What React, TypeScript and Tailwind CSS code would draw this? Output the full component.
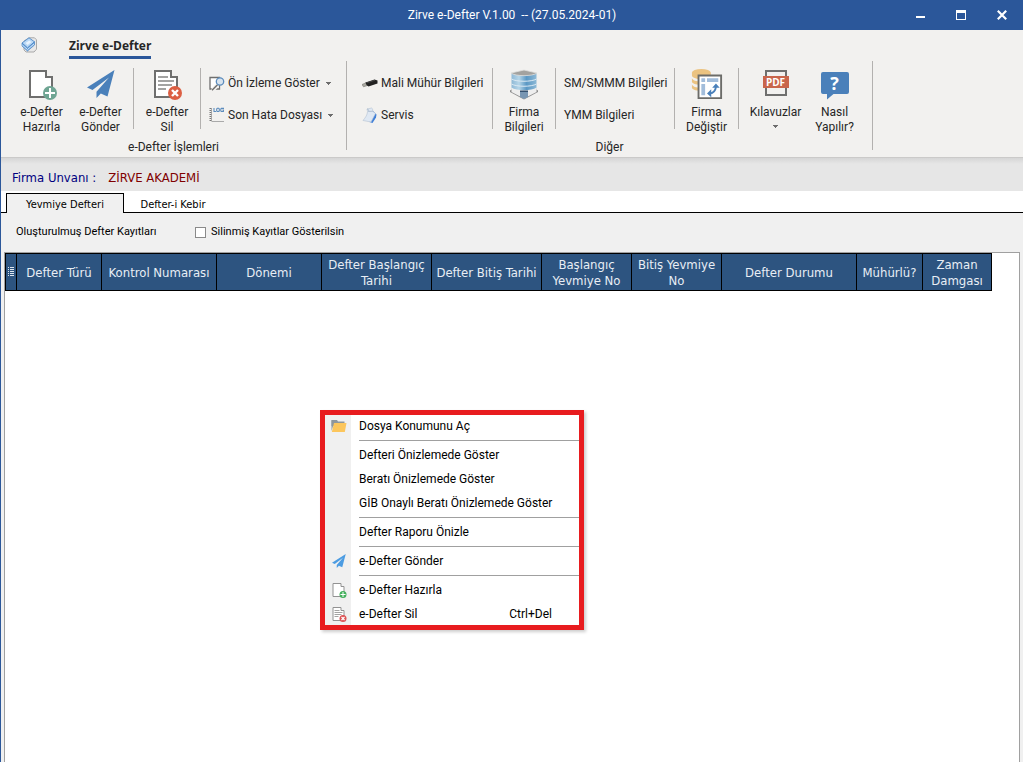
import type { ReactNode } from "react";

type IconProps = { className?: string };

function PageAddIcon({ className, page = "#6f6f6e", badge = "#6fa593" }: IconProps & { page?: string; badge?: string }) {
  return (
    <svg viewBox="0 0 32 32" className={className} aria-hidden="true">
      <path d="M4 3h16v6h6v20H4z" fill="#fff" stroke={page} strokeWidth="2" />
      <circle cx="24" cy="25" r="7" fill={badge} />
      <path d="M24 20v10M19 25h10" stroke="#fff" strokeWidth="2" />
    </svg>
  );
}

function PageDeleteIcon({ className, page = "#6f6f6e", badge = "#dc5f43" }: IconProps & { page?: string; badge?: string }) {
  return (
    <svg viewBox="0 0 32 32" className={className} aria-hidden="true">
      <path d="M4 3h16v6h6v20H4z" fill="#fff" stroke={page} strokeWidth="2" />
      <path d="M7 9h10M7 13h16M7 17h14M7 21h8" stroke="#a3a3a2" strokeWidth="2" />
      <circle cx="24" cy="25" r="7" fill={badge} />
      <path d="M21 22l6 6M27 22l-6 6" stroke="#fff" strokeWidth="2.400" />
    </svg>
  );
}

function PlaneIcon({ className, color = "#4a80ba" }: IconProps & { color?: string }) {
  return (
    <svg viewBox="0 0 32 32" className={className} aria-hidden="true">
      <path d="M29.500 2L2 19.500l5.500 2.500L24 9.500 11.500 23.800V30l4.300-4.400 6.700 2.900z" fill={color} />
    </svg>
  );
}

function AppLogo({ className }: IconProps) {
  return (
    <svg viewBox="0 0 16 16" className={className} aria-hidden="true">
      <path d="M8 .800h5.500l2 2v9.400l-2.500 2.800H5l-2-2V4z" fill="#e8e8e8" stroke="#a9a9a9" />
      <path d="M1 6L8 .800l5.500 4L6.500 11z" fill="#b9d8f5" stroke="#5b91cb" />
      <path d="M1 6v3l5.500 5 7-6V4.800L6.500 11z" fill="#6ba3dd" stroke="#4c86c4" strokeWidth=".7" />
      <path d="M1.300 8L6.500 12.500l6.500-5.500" fill="none" stroke="#d3e6f8" />
      <path d="M4.500 6l3.700-2.600 2.300 1.600-3.800 3z" fill="#e8f3fd" />
    </svg>
  );
}

function PreviewIcon({ className }: IconProps) {
  return (
    <svg viewBox="0 0 16 16" className={className} aria-hidden="true">
      <path d="M1 2.500h9.500V14H1z" fill="#fff" stroke="#6f6f6e" strokeWidth="1.300" />
      <path d="M3.500 15.500l4.500-5" stroke="#f2f1ef" strokeWidth="4" />
      <path d="M3 15.300l5.500-5.500" stroke="#6f6f6e" strokeWidth="1.500" />
      <circle cx="11" cy="6.500" r="3.700" fill="#d7e3ee" stroke="#5c8cbd" strokeWidth="1.300" />
    </svg>
  );
}

function LogIcon({ className }: IconProps) {
  return (
    <svg viewBox="0 0 16 16" className={className} aria-hidden="true">
      <path d="M1.500 1v13.500" stroke="#777" strokeWidth="2" strokeDasharray="1 1" />
      <path d="M2.500 14.500H15" stroke="#aaa" />
      <path d="M2.500 1v13" stroke="#999" strokeWidth=".8" />
      <path
        d="M5 1v3.500h2M8.300 1.300h1.400l.6.600v2l-.6.600H8.300l-.6-.6v-2zM15 1.400h-2.600l-.6.600v1.900l.6.600h2V3h-1"
        fill="none"
        stroke="#5c8cbd"
        strokeWidth="1.100"
      />
    </svg>
  );
}

function UsbIcon({ className }: IconProps) {
  return (
    <svg viewBox="0 0 16 16" className={className} aria-hidden="true">
      <path d="M0 9.500l4-1.700 2 2.500-4.500 1.500z" fill="#aaa9a2" stroke="#77766f" strokeWidth=".6" />
      <path d="M3.500 7.500L12.500 4.500l3 1v3L6.500 11.500l-2-1.500z" fill="#222" />
      <path d="M5 7.800l8-2.600" stroke="#555" strokeWidth=".7" />
    </svg>
  );
}

function ServiceIcon({ className }: IconProps) {
  return (
    <svg viewBox="0 0 16 16" className={className} aria-hidden="true">
      <path d="M11 4l3.500 3.500-.5 3L10.500 16l-3-1z" fill="#3f7fd8" />
      <path d="M5 2l4.500-1c1.500.500 1 2.500 1.500 3.500l2.500 2L9 15l-8-1.500C3 11 5.500 8 5.500 4.500z" fill="#dfe8f3" stroke="#b3c1d2" strokeWidth=".6" />
      <path d="M5 2c1.500 0 2 1.200 1.500 2.500L11 4.200" fill="none" stroke="#9fb0c4" strokeWidth=".7" />
    </svg>
  );
}

function BuildingIcon({ className }: IconProps) {
  return (
    <svg viewBox="0 0 32 32" className={className} aria-hidden="true">
      <defs>
        <linearGradient id="glass" x1="0" x2="1">
          <stop offset="0" stopColor="#8fb9d6" />
          <stop offset=".3" stopColor="#b5d5e8" />
          <stop offset=".6" stopColor="#5b98c4" />
          <stop offset="1" stopColor="#8db9d6" />
        </linearGradient>
      </defs>
      <path d="M2 22.500l3-2h22l3 2v1.500l-14 7.500L2 24z" fill="#8c8c8c" />
      <path d="M3.500 5h25v15.500L16 27 3.500 20.500z" fill="url(#glass)" />
      <path d="M3 5L16 2l13 3c-4 3.500-22 3.500-26 0z" fill="#a3a29f" stroke="#dfdfdd" strokeWidth=".8" />
      <path d="M3.500 11c5 3 20 3 25 0M3.500 16c5 3 20 3 25 0" fill="none" stroke="#dceaf4" />
      <path d="M3.500 19.500c5 3.500 20 3.500 25 0V24L16 30.500 3.500 24z" fill="#eeeeee" />
      <path d="M12 23h8v6l-4 2-4-2z" fill="#7996b2" />
      <path d="M12 22.500h8v1.500h-8z" fill="#35516f" />
    </svg>
  );
}

function SwitchCompanyIcon({ className }: IconProps) {
  return (
    <svg viewBox="0 0 34 34" className={className} aria-hidden="true">
      <ellipse cx="11" cy="5" rx="10" ry="4" fill="#ebc381" />
      <path d="M1 5v3c0 2 4.500 4 10 4s10-2 10-4V5z" fill="#ebc381" />
      <path d="M1 11c1 2.200 4 3.400 10 3.400V18C4 17.500 1 16 1 14.500zM1 17.500c1 2.200 4 3.400 10 3.400v3.600C4 24 1 22.500 1 21z" fill="#ebc381" />
      <path d="M8 8h24v24H8z" fill="#fff" stroke="#6c6c69" strokeWidth="2" />
      <path d="M11 11h4v4h-4zM17 11h12v4H17zM11 17h4v12h-4z" fill="#a2bddb" />
      <path d="M20 27c4-.5 6-3 6.500-7" fill="none" stroke="#4a80ba" strokeWidth="2" />
      <path d="M22.500 21l4-4.500 4 4.500zM21.500 22.500L17 27l4.500 4z" fill="#4a80ba" />
    </svg>
  );
}

function PdfIcon({ className }: IconProps) {
  return (
    <span className={`relative block ${className ?? ""}`} aria-hidden="true">
      <svg viewBox="0 0 32 32" className="size-8">
        <path d="M6 3h20v24H6z" fill="#f2f1ef" stroke="#6f6f6e" strokeWidth="2" />
        <path d="M3 8h26v12H3z" fill="#c9654b" />
      </svg>
      <span className="absolute inset-x-0 top-2 text-center font-['Open_Sans',sans-serif] text-[10px] leading-3 font-bold text-white">PDF</span>
    </span>
  );
}

function HelpIcon({ className }: IconProps) {
  return (
    <span className={`relative block ${className ?? ""}`} aria-hidden="true">
      <svg viewBox="0 0 32 32" className="size-8">
        <path d="M4 4h24a2 2 0 012 2v18a2 2 0 01-2 2H14.500L8 31.500V26H4a2 2 0 01-2-2V6a2 2 0 012-2z" fill="#4a80ba" />
      </svg>
      <span className="absolute inset-x-0 top-1 text-center font-['Open_Sans',sans-serif] text-[18px] leading-[22px] font-bold text-white">?</span>
    </span>
  );
}

function FolderIcon({ className }: IconProps) {
  return (
    <svg viewBox="0 0 16 16" className={className} aria-hidden="true">
      <path d="M.5 2H6l1 1.500h6.500V8H.5z" fill="#8f979c" />
      <path d="M.5 2v11L3 5z" fill="#8f979c" />
      <path d="M3 5h12.500L13.800 14H.8z" fill="#fcc65c" />
    </svg>
  );
}

function Caret() {
  return (
    <svg viewBox="0 0 5 3" className="h-[3px] w-[5px]" aria-hidden="true">
      <path d="M0 0h5v1H4v1H3v1H2V2H1V1H0z" fill="#6d6d6d" />
    </svg>
  );
}

function LargeButton({ icon, lines, caret, width }: { icon: ReactNode; lines: string[]; caret?: boolean; width: string }) {
  return (
    <button type="button" className={`flex shrink-0 flex-col items-center gap-[5px] ${width}`}>
      {icon}
      <span className="flex flex-col items-center leading-[15px]">
        {lines.map((line) => (
          <span key={line} className="whitespace-nowrap">{line}</span>
        ))}
        {caret && (
          <span className="flex h-3 items-center">
            <Caret />
          </span>
        )}
      </span>
    </button>
  );
}

function SmallButton({ icon, label, caret }: { icon?: ReactNode; label: string; caret?: boolean }) {
  return (
    <button type="button" className="flex h-8 items-center whitespace-nowrap">
      {icon && <span className="mr-[3px]">{icon}</span>}
      {label}
      {caret && (
        <span className="ml-[6px]">
          <Caret />
        </span>
      )}
    </button>
  );
}

function Divider() {
  return <div className="h-[61px] w-px shrink-0 bg-[#b3b1af]" />;
}

function RibbonGroup({ title, width, children }: { title: string; width: string; children: ReactNode }) {
  return (
    <section aria-label={title} className={`flex shrink-0 flex-col justify-between border-r border-[#b3b1af] pt-[7px] ${width}`}>
      <div className="flex">{children}</div>
      <div className="-mb-[5px] text-center leading-4">{title}</div>
    </section>
  );
}

const columns = [
  { label: "Defter Türü", width: "w-[85px]" },
  { label: "Kontrol Numarası", width: "w-[115px]" },
  { label: "Dönemi", width: "w-[105px]" },
  { label: "Defter Başlangıç Tarihi", width: "w-[110px]" },
  { label: "Defter Bitiş Tarihi", width: "w-[110px]" },
  { label: "Başlangıç Yevmiye No", width: "w-[90px]" },
  { label: "Bitiş Yevmiye No", width: "w-[90px]" },
  { label: "Defter Durumu", width: "w-[135px]" },
  { label: "Mühürlü?", width: "w-[66px]" },
  { label: "Zaman Damgası", width: "w-[69px]" },
];

type MenuEntry = { label: string; icon?: ReactNode; shortcut?: string };

const menuGroups: MenuEntry[][] = [
  [{ label: "Dosya Konumunu Aç", icon: <FolderIcon className="size-4" /> }],
  [
    { label: "Defteri Önizlemede Göster" },
    { label: "Beratı Önizlemede Göster" },
    { label: "GİB Onaylı Beratı Önizlemede Göster" },
  ],
  [{ label: "Defter Raporu Önizle" }],
  [{ label: "e-Defter Gönder", icon: <PlaneIcon className="size-4" color="#4c9ce2" /> }],
  [
    { label: "e-Defter Hazırla", icon: <PageAddIcon className="size-4" page="#929292" badge="#43b05c" /> },
    { label: "e-Defter Sil", icon: <PageDeleteIcon className="size-4" page="#929292" badge="#dc5254" />, shortcut: "Ctrl+Del" },
  ],
];

function ContextMenu() {
  return (
    <div className="absolute top-[410px] left-[319px] w-[264px] bg-[linear-gradient(to_right,#f0f0f0_31px,#fff_31px)] py-1 text-[12px] text-black shadow-[2px_2px_3px_rgba(0,0,0,0.2)]">
      <div role="menu">
        {menuGroups.map((group, index) => (
          <div key={group[0].label} role="group">
            {index > 0 && (
              <div className="flex h-[5px] items-center pl-[39px]">
                <div className="h-px w-full bg-[#a0a0a0]" />
              </div>
            )}
            {group.map((item) => (
              <button key={item.label} type="button" role="menuitem" className="flex h-6 w-full items-center pr-8 pl-[11px] text-left whitespace-nowrap">
                <span className="mr-3 size-4 shrink-0">{item.icon}</span>
                <span className="grow">{item.label}</span>
                {item.shortcut && <span>{item.shortcut}</span>}
              </button>
            ))}
          </div>
        ))}
      </div>
      <div className="pointer-events-none absolute inset-0 border-5 border-[#e81c1f]" />
    </div>
  );
}

export default function App() {
  return (
    <div className="relative flex min-h-screen flex-col border-l border-[#2b579a] bg-[#f0f0f0] font-['Roboto','Noto_Sans',sans-serif] text-[12px] text-[#262626]">
      <header className="flex h-[30px] items-center bg-[#2b579a] text-white">
        <div className="w-[126px]" />
        <h1 className="grow text-center whitespace-pre">Zirve e-Defter V.1.00  -- (27.05.2024-01)</h1>
        <div className="flex w-[126px] justify-end">
          <button type="button" aria-label="Simge durumuna küçült" className="flex h-[30px] w-10 items-center justify-center">
            <svg viewBox="0 0 10 10" className="size-[10px]"><path d="M0 6h9v2H0z" fill="#fff" /></svg>
          </button>
          <button type="button" aria-label="Ekranı kapla" className="flex h-[30px] w-10 items-center justify-center">
            <svg viewBox="0 0 10 10" className="size-[10px]"><path d="M0 0h10v10H0zM1 3v6h8V3z" fill="#fff" fillRule="evenodd" /></svg>
          </button>
          <button type="button" aria-label="Kapat" className="flex h-[30px] w-[42px] items-center justify-center">
            <svg viewBox="0 0 10 10" className="size-[10px]"><path d="M.8.800l8.400 8.400M9.200.800L.8 9.200" stroke="#fff" strokeWidth="2.200" /></svg>
          </button>
        </div>
      </header>

      <div className="h-[128px] border-b border-[#cbcac9] bg-[#f2f1ef]">
        <nav className="flex h-[31px] items-start pl-5">
          <AppLogo className="mt-[7px] size-4" />
          <button type="button" className="ml-8 border-b-3 border-[#2b579a] pt-2 pb-[3px] font-['Open_Sans','Noto_Sans',sans-serif] leading-[15px] font-bold whitespace-nowrap">
            Zirve e-Defter
          </button>
        </nav>
        <div className="flex h-[89px]">
          <RibbonGroup title="e-Defter İşlemleri" width="w-[346px]">
            <div className="flex w-[132px] pl-[11px]">
              <LargeButton icon={<PageAddIcon className="size-8" />} lines={["e-Defter", "Hazırla"]} width="w-[59px]" />
              <LargeButton icon={<PlaneIcon className="size-8" />} lines={["e-Defter", "Gönder"]} width="w-[59px]" />
            </div>
            <Divider />
            <LargeButton icon={<PageDeleteIcon className="size-8" />} lines={["e-Defter", "Sil"]} width="w-[66px]" />
            <Divider />
            <div className="-mt-px flex flex-col pl-2">
              <SmallButton icon={<PreviewIcon className="size-4" />} label="Ön İzleme Göster" caret />
              <SmallButton icon={<LogIcon className="size-4" />} label="Son Hata Dosyası" caret />
            </div>
          </RibbonGroup>
          <RibbonGroup title="Diğer" width="w-[526px]">
            <div className="-mt-px flex w-[145px] shrink-0 flex-col pl-[15px]">
              <SmallButton icon={<UsbIcon className="size-4" />} label="Mali Mühür Bilgileri" />
              <SmallButton icon={<ServiceIcon className="size-4" />} label="Servis" />
            </div>
            <Divider />
            <LargeButton icon={<BuildingIcon className="size-8" />} lines={["Firma", "Bilgileri"]} width="w-[62px]" />
            <Divider />
            <div className="-mt-px flex w-[118px] shrink-0 flex-col pl-2">
              <SmallButton label="SM/SMMM Bilgileri" />
              <SmallButton label="YMM Bilgileri" />
            </div>
            <Divider />
            <LargeButton icon={<SwitchCompanyIcon className="size-8" />} lines={["Firma", "Değiştir"]} width="w-[63px]" />
            <Divider />
            <div className="flex pl-[7px]">
              <LargeButton icon={<PdfIcon className="size-8" />} lines={["Kılavuzlar"]} caret width="w-[59px]" />
              <LargeButton icon={<HelpIcon className="size-8" />} lines={["Nasıl", "Yapılır?"]} width="w-[59px]" />
            </div>
          </RibbonGroup>
        </div>
      </div>

      <div className="flex h-[33px] items-center gap-3 bg-[linear-gradient(to_bottom,#d6d6d6,#e6e6e6_6px)] pt-[6px] pl-[11px] font-['DejaVu_Sans_Condensed','DejaVu_Sans',sans-serif] text-[13px]">
        <span className="text-[#000080]">Firma Unvanı :</span>
        <span className="text-[#800000]">ZİRVE AKADEMİ</span>
      </div>

      <div role="tablist" className="flex h-[22px] items-end border-b border-black bg-white pl-[5px] font-['DejaVu_Sans_Condensed','DejaVu_Sans',sans-serif] text-[11px] text-black">
        <button type="button" role="tab" aria-selected="true" className="-mb-px h-5 w-[118px] border border-b-0 border-black bg-[#f0f0f0] pt-[3px] whitespace-nowrap">
          Yevmiye Defteri
        </button>
        <button type="button" role="tab" aria-selected="false" className="h-5 w-[98px] pt-[5px] whitespace-nowrap">
          Defter-i Kebir
        </button>
      </div>

      <main className="flex grow flex-col pr-[3px] pl-[3px] font-['DejaVu_Sans_Condensed','DejaVu_Sans',sans-serif]">
        <div className="flex h-[39px] items-center pl-3 font-['Roboto','Noto_Sans',sans-serif] text-[11px] text-black">
          <h2 className="w-[179px]">Oluşturulmuş Defter Kayıtları</h2>
          <input id="deleted" type="checkbox" className="size-[11px] appearance-none border border-[#8a8a8a] bg-white checked:bg-[#2b579a]" />
          <label htmlFor="deleted" className="pl-[5px]">Silinmiş Kayıtlar Gösterilsin</label>
        </div>
        <div className="grow border border-b-0 border-[#a0a0a0] bg-white">
          <table className="w-[987px] table-fixed border-collapse text-[13px] leading-4 text-[#e8eef5]">
            <thead>
              <tr className="h-[37px] bg-[#2d5480]">
                <th className="w-[11px] border border-black p-0" aria-label="Satır seçici">
                  <svg viewBox="0 0 6 10" className="mx-auto h-[10px] w-[6px]" aria-hidden="true">
                    <path d="M0 .5h1M2 .5h4M0 2.500h1M2 2.500h4M0 4.500h1M2 4.500h4M0 6.500h1M2 6.500h4M0 8.500h1M2 8.500h4" stroke="#dfe7f0" />
                  </svg>
                </th>
                {columns.map((column) => (
                  <th key={column.label} className={`border border-black p-0 pt-px text-center font-normal ${column.width}`}>
                    {column.label}
                  </th>
                ))}
              </tr>
            </thead>
          </table>
        </div>
      </main>

      <ContextMenu />
    </div>
  );
}
